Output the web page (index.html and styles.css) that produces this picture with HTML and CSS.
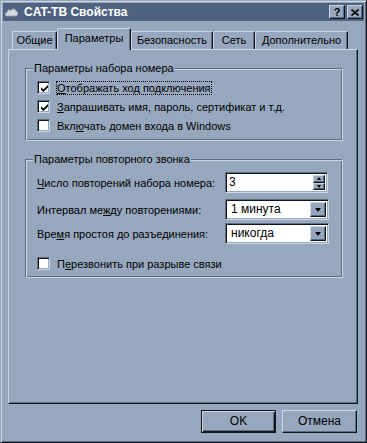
FILE: index.html
```html
<!DOCTYPE html>
<html lang="ru">
<head>
    <meta charset="UTF-8">
    <title>CAT-TB Свойства</title>
    <link rel="stylesheet" href="styles.css">
</head>
<body>
    <div class="window">
        <div class="titlebar">
            <svg class="title-icon" width="13" height="9" viewBox="0 0 13 9">
                <path d="M1 8 C-0.5 7 0 4.5 2 4.5 C2 2 4.5 1 6 2.5 C7 0.5 10.5 0.5 11 3 C13 3.5 13.5 7 11.5 8 Z" fill="#d3dae3" stroke="#8d9aab" stroke-width="0.8"/>
            </svg>
            <span class="title">CAT-TB Свойства</span>
            <div class="title-buttons">
                <div class="tbtn help">?</div>
                <div class="tbtn close">
                    <svg width="8" height="7" viewBox="0 0 8 7">
                        <path d="M0.5 0.5 L7.5 6.5 M7.5 0.5 L0.5 6.5" stroke="#000" stroke-width="1.6"/>
                    </svg>
                </div>
            </div>
        </div>

        <div class="tabs">
            <div class="tab tab-general">Общие</div>
            <div class="tab tab-params active">Параметры</div>
            <div class="tab tab-security">Безопасность</div>
            <div class="tab tab-net">Сеть</div>
            <div class="tab tab-extra">Дополнительно</div>
        </div>

        <div class="page">
            <div class="group group-dial">
                <span class="legend">Параметры набора номера</span>
                <div class="check-row">
                    <span class="box"><svg width="7" height="7" viewBox="0 0 7 7"><path d="M0 2.3 L2.4 4.6 L7 0 L7 2.4 L2.4 7 L0 4.7 Z" fill="#000"/></svg></span>
                    <span class="check-label focus"><u>О</u>тображать ход подключения</span>
                </div>
                <div class="check-row">
                    <span class="box"><svg width="7" height="7" viewBox="0 0 7 7"><path d="M0 2.3 L2.4 4.6 L7 0 L7 2.4 L2.4 7 L0 4.7 Z" fill="#000"/></svg></span>
                    <span class="check-label"><u>З</u>апрашивать имя, пароль, сертификат и т.д.</span>
                </div>
                <div class="check-row">
                    <span class="box"></span>
                    <span class="check-label">Вкл<u>ю</u>чать домен входа в Windows</span>
                </div>
            </div>

            <div class="group group-redial">
                <span class="legend">Параметры повторного звонка</span>
                <div class="field-row row-count">
                    <span class="field-label"><u>Ч</u>исло повторений набора номера:</span>
                    <div class="spinner">
                        <span class="value">3</span>
                        <div class="spin">
                            <div class="spin-btn"><span class="arrow-up"></span></div>
                            <div class="spin-btn"><span class="arrow-down"></span></div>
                        </div>
                    </div>
                </div>
                <div class="field-row row-interval">
                    <span class="field-label">Интервал ме<u>ж</u>ду повторениями:</span>
                    <div class="combo">
                        <span class="value">1 минута</span>
                        <div class="drop"><span class="arrow-down big"></span></div>
                    </div>
                </div>
                <div class="field-row row-idle">
                    <span class="field-label">Вре<u>м</u>я простоя до разъединения:</span>
                    <div class="combo">
                        <span class="value">никогда</span>
                        <div class="drop"><span class="arrow-down big"></span></div>
                    </div>
                </div>
                <div class="check-row row-redial">
                    <span class="box"></span>
                    <span class="check-label">П<u>е</u>резвонить при разрыве связи</span>
                </div>
            </div>
        </div>

        <div class="buttons">
            <div class="btn default">OK</div>
            <div class="btn">Отмена</div>
        </div>
    </div>
</body>
</html>
```

FILE: styles.css
```css
* {
    box-sizing: border-box;
}

body {
    margin: 0;
    background: #97a8be;
    font-family: "Liberation Sans", Arial, sans-serif;
    font-size: 11px;
    color: #000;
}

/* window frame */
.window {
    width: 367px;
    height: 443px;
    padding: 2px;
    background: #97a8be;
    border: 1px solid;
    border-color: #97a8be #10151c #10151c #97a8be;
    box-shadow: inset 1px 1px #cdd6e2, inset -1px -1px #5e6d82;
}

.titlebar {
    height: 18px;
    display: flex;
    align-items: center;
    padding-left: 2px;
    background: #4f6381;
    color: #fff;
}

.title-icon {
    margin-right: 6px;
}

.title {
    font-size: 12px;
    font-weight: bold;
    flex: 1;
}

.title-buttons {
    display: flex;
    gap: 2px;
    margin-right: 1px;
}

.tbtn {
    width: 16px;
    height: 14px;
    display: flex;
    align-items: center;
    justify-content: center;
    background: #97a8be;
    border: 1px solid;
    border-color: #cdd6e2 #10151c #10151c #cdd6e2;
    box-shadow: inset -1px -1px #5e6d82;
    color: #000;
    font-weight: bold;
    font-size: 11px;
    line-height: 12px;
}

/* tabs */
.tabs {
    position: relative;
    z-index: 1;
    height: 21px;
    margin-top: 7px;
    padding-left: 9px;
    display: flex;
    align-items: flex-end;
}

.tab {
    height: 18px;
    line-height: 16px;
    text-align: center;
    border: 1px solid #cdd6e2;
    border-bottom: none;
    border-right-color: #10151c;
    border-radius: 2px 2px 0 0;
    box-shadow: inset -1px 0 #5e6d82;
}

.tab.active {
    height: 22px;
    margin-bottom: -1px;
    line-height: 18px;
    background: #97a8be;
}

.tab-general { width: 45px; }
.tab-params { width: 74px; }
.tab-security { width: 82px; }
.tab-net { width: 42px; }
.tab-extra { width: 93px; }

/* tab page */
.page {
    width: 350px;
    height: 355px;
    margin-left: 5px;
    padding: 18px 0 0 16px;
    border: 1px solid;
    border-color: #cdd6e2 #10151c #10151c #cdd6e2;
    box-shadow: inset -1px -1px #5e6d82;
}

.group {
    position: relative;
    width: 318px;
    border: 1px solid #5e6d82;
    border-right-color: #cdd6e2;
    border-bottom-color: #cdd6e2;
    box-shadow: inset 1px 1px #cdd6e2, inset -1px -1px #5e6d82;
    padding-left: 11px;
}

.legend {
    position: absolute;
    top: -7px;
    left: 7px;
    padding: 0 1px;
    line-height: 13px;
    background: #97a8be;
}

.group-dial {
    height: 73px;
    padding-top: 9px;
}

.group-redial {
    height: 119px;
    margin-top: 18px;
    padding-top: 12px;
}

.check-row {
    height: 19px;
    display: flex;
    align-items: center;
}

.box {
    width: 13px;
    height: 13px;
    margin-right: 6px;
    padding: 2px 0 0 3px;
    background: #fff;
    border: 1px solid;
    border-color: #5e6d82 #cdd6e2 #cdd6e2 #5e6d82;
    box-shadow: inset 1px 1px #10151c, inset -1px -1px #97a8be;
}

.box svg {
    display: block;
    margin-top: 1px;
}

.check-label {
    line-height: 12px;
    border: 1px solid transparent;
}

.check-label.focus {
    border: 1px dotted #000;
}

.field-row {
    height: 21px;
    display: flex;
    align-items: center;
}

.row-interval { margin-top: 6px; }
.row-idle { margin-top: 3px; }
.row-redial { margin-top: 10px; }

.field-label {
    width: 188px;
}

/* inputs */
.spinner,
.combo {
    height: 21px;
    display: flex;
    padding: 2px;
    background: #fff;
    border: 1px solid;
    border-color: #5e6d82 #cdd6e2 #cdd6e2 #5e6d82;
    box-shadow: inset 1px 1px #10151c, inset -1px -1px #97a8be;
}

.spinner { width: 103px; }
.combo { width: 104px; }

.value {
    flex: 1;
    line-height: 15px;
    font-size: 12px;
}

.spinner .value { padding-left: 1px; }
.combo .value { padding-left: 3px; }

.spin {
    width: 12px;
    display: flex;
    flex-direction: column;
}

.spin-btn,
.drop {
    display: flex;
    align-items: center;
    justify-content: center;
    background: #97a8be;
    border: 1px solid;
    border-color: #cdd6e2 #10151c #10151c #cdd6e2;
    box-shadow: inset -1px -1px #5e6d82;
}

.spin-btn {
    height: 8.5px;
}

.drop {
    width: 16px;
}

.arrow-up,
.arrow-down {
    width: 0;
    height: 0;
    border-left: 2.5px solid transparent;
    border-right: 2.5px solid transparent;
}

.arrow-up { border-bottom: 3px solid #000; }
.arrow-down { border-top: 3px solid #000; }

.arrow-down.big {
    border-left-width: 3.5px;
    border-right-width: 3.5px;
    border-top-width: 4px;
}

/* dialog buttons */
.buttons {
    display: flex;
    justify-content: flex-end;
    gap: 6px;
    margin-top: 6px;
    padding-right: 7px;
}

.btn {
    width: 75px;
    height: 23px;
    line-height: 21px;
    text-align: center;
    font-size: 12px;
    border: 1px solid;
    border-color: #cdd6e2 #10151c #10151c #cdd6e2;
    box-shadow: inset -1px -1px #5e6d82;
}

.btn.default {
    border-color: #10151c;
    box-shadow: inset 1px 1px #cdd6e2, inset -1px -1px #10151c, inset -2px -2px #5e6d82;
}
```
